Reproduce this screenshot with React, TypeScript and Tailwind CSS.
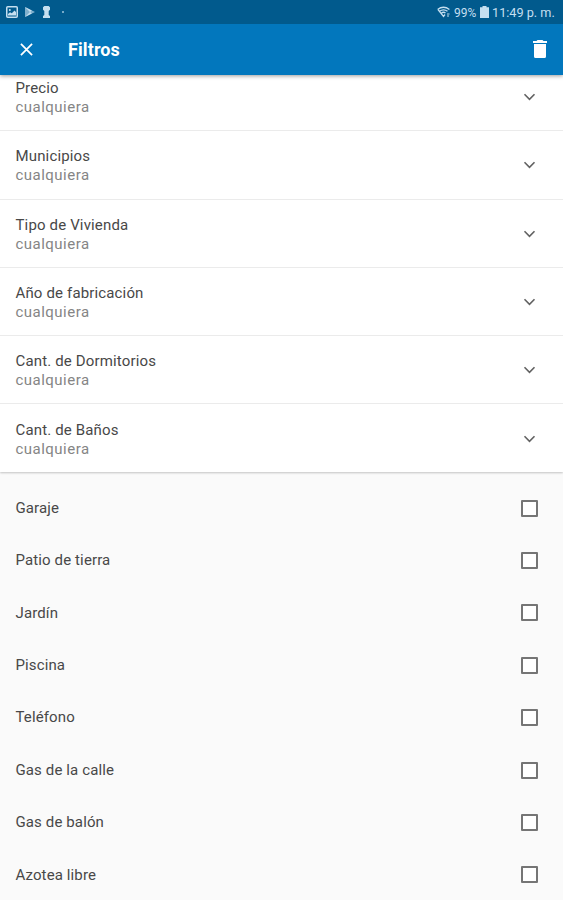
const FILTERS = [
  'Precio',
  'Municipios',
  'Tipo de Vivienda',
  'Año de fabricación',
  'Cant. de Dormitorios',
  'Cant. de Baños',
]

const FEATURES = [
  'Garaje',
  'Patio de tierra',
  'Jardín',
  'Piscina',
  'Teléfono',
  'Gas de la calle',
  'Gas de balón',
  'Azotea libre',
]

function StatusBar() {
  return (
    <div className="flex h-6 items-center justify-between bg-[#015a8d] pl-1.5 pr-2 text-[#c5dff0]">
      <div className="flex items-center">
        <svg width="12" height="12" viewBox="0 0 12 12" fill="none" stroke="currentColor">
          <rect x="0.75" y="0.75" width="10.5" height="10.5" rx="1" strokeWidth="1.5" />
          <path d="M2 9.5V8l2-1.800 1.800 1L8.500 4.500 10 6v3.500Z" fill="currentColor" stroke="none" />
          <circle cx="3.800" cy="4" r="1" fill="currentColor" stroke="none" />
        </svg>
        <svg className="ml-[7px]" width="10" height="10" viewBox="0 0 10 10" fill="currentColor">
          <path d="M0 0 10 5 0 10Z" fillOpacity="0.65" />
          <path d="M0 0 5 5 0 10 6.8 6.6 5 5l1.8-1.6Z" />
        </svg>
        <svg className="ml-[7px]" width="9" height="12" viewBox="0 0 9 12" fill="currentColor">
          <path d="M1 1.2 2.4 0h4.2L8 1.2v2.6L6.700 5v4L8 10v2H1v-2l1.300-1V5L1 3.800Z" />
        </svg>
        <span className="ml-[11px] size-0.5 bg-[#c5dff0]/60" />
      </div>
      <div className="flex items-center text-[13.5px] leading-none">
        <svg width="14" height="12" viewBox="0 0 14 12" fill="none" stroke="currentColor" strokeWidth="1.3">
          <path d="M.6 3.500Q6.500-1 12.400 3.500M2.500 5.300q4-3 8 0M1 3.600 6.500 10.500 8 8.500M4.500 7q2-1.500 4 0" />
          <path d="M10 8h2.500M10 10h2" strokeWidth="1" />
        </svg>
        <span className="ml-[3px] w-[25px] origin-left scale-x-[0.89] pt-px whitespace-nowrap">99%</span>
        <svg className="ml-[1px]" width="9" height="12" viewBox="0 0 9 12" fill="currentColor">
          <path d="M2.500 0h4v1.200H9V12H0V1.200h2.500Z" />
        </svg>
        <span className="ml-[3px] w-[63px] origin-left scale-x-[0.94] pt-px whitespace-nowrap">11:49 p. m.</span>
      </div>
    </div>
  )
}

function AppBar() {
  return (
    <div className="flex h-[51px] items-center bg-[#0277bd] text-white">
      <svg className="ml-5 -mt-px" width="13" height="13" viewBox="0 0 14 14" stroke="currentColor" strokeWidth="1.9">
        <path d="m1 1 12 12M13 1 1 13" />
      </svg>
      <h1 className="ml-[35px] text-[18px] leading-6 font-bold tracking-[0.1px]">Filtros</h1>
      <svg className="-mt-px mr-[16px] ml-auto" width="14" height="18" viewBox="0 0 14 18" fill="currentColor">
        <path d="M0 1h3.500l1-1h5l1 1H14v2H0ZM1 4h12v12.500Q13 18 11.500 18h-9Q1 18 1 16.500Z" />
      </svg>
    </div>
  )
}

function App() {
  return (
    <div className="h-[900px] w-full overflow-hidden bg-[#fafafa] font-[Roboto,sans-serif]">
      <header className="relative z-10 shadow-[0_1px_4px_rgba(0,0,0,0.4)]">
        <StatusBar />
        <AppBar />
      </header>

      {/* the list is scrolled a little way under the header */}
      <div className="-mt-[12px] bg-white shadow-[0_1px_2px_rgba(0,0,0,0.22)]">
        {FILTERS.map((label) => (
          <div
            key={label}
            className="flex h-[68.3px] items-center justify-between border-b border-[#ebebeb] pr-[27px] pl-[15.5px] last:h-[67.5px] last:border-b-0"
          >
            <div className="pt-[3px] text-[15px] leading-[19px]">
              <div className="tracking-[0.15px] text-[#484848]">{label}</div>
              <div className="tracking-[0.48px] text-[#858585]">cualquiera</div>
            </div>
            <svg className="mt-px" width="13" height="8" viewBox="0 0 13 8" fill="none" stroke="#626262" strokeWidth="1.6">
              <path d="m1.500 1.300 5 5 5-5" />
            </svg>
          </div>
        ))}
      </div>

      <div className="pt-[10px]">
        {FEATURES.map((name) => (
          <label key={name} className="flex h-[52.4px] items-center justify-between pr-[25px] pl-[15.5px]">
            <span className="text-[15px] tracking-[0.12px] text-[#484848]">{name}</span>
            <span className="size-[17px] rounded-[1px] border-2 border-[#757575] bg-white" />
          </label>
        ))}
      </div>
    </div>
  )
}

export default App
